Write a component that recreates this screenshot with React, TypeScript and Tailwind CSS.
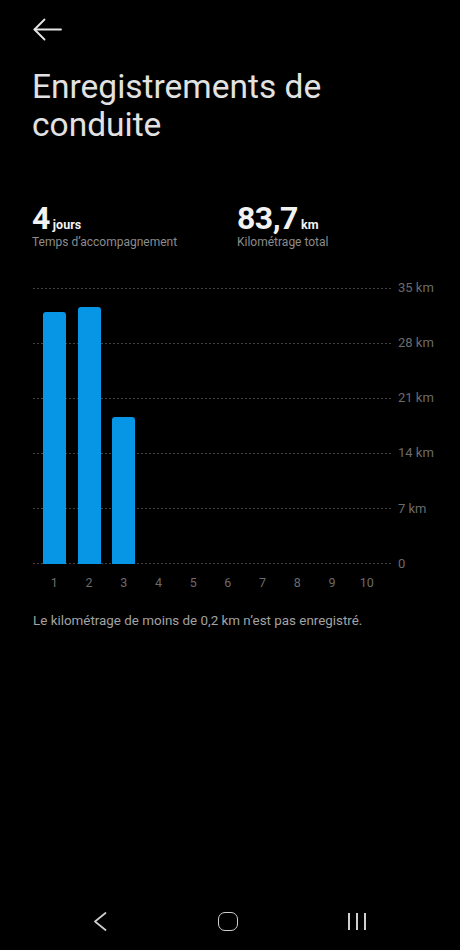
const days = [32.1, 32.7, 18.7, 0, 0, 0, 0, 0, 0, 0];
const ticks = ['35 km', '28 km', '21 km', '14 km', '7 km', '0'];
const MAX = 35;
const PLOT_H = 275;

const font = { fontFamily: 'Roboto, "Noto Sans", sans-serif' };

const StatBlock = ({ value, unit, label }: { value: string; unit: string; label: string }) => (
  <div className="flex flex-col">
    <div className="flex items-baseline">
      <span className="text-[32px] font-bold leading-[32px] text-[#f2f2f2] tracking-[-0.5px]">{value}</span>
      <span className="ml-[3px] text-[12.5px] font-bold text-[#f2f2f2]">{unit}</span>
    </div>
    <span className="text-[12px] leading-[14px] text-[#8c8c8c]">{label}</span>
  </div>
);

export default function App() {
  return (
    <div className="w-[460px] h-[950px] bg-black flex flex-col" style={font}>
      {/* header */}
      <div className="pl-[33px] pt-[18px] h-[52px]">
        <svg width="30" height="24" viewBox="0 0 30 24" fill="none" stroke="#e6e6e6" strokeWidth="1.8" strokeLinecap="round" strokeLinejoin="round">
          <path d="M1.5 11.5H28" />
          <path d="M11.5 1.5L1.5 11.5L11.5 21.5" />
        </svg>
      </div>

      <h1 className="mt-[16px] px-[32px] text-[33.5px] leading-[38px] text-[#e2e2e2] font-normal">
        Enregistrements de conduite
      </h1>

      {/* stats */}
      <div className="mt-[58px] pl-[32px] flex">
        <div className="w-[205px]">
          <StatBlock value="4" unit="jours" label="Temps d’accompagnement" />
        </div>
        <StatBlock value="83,7" unit="km" label="Kilométrage total" />
      </div>

      {/* chart */}
      <div className="mt-[39px] pl-[33px] flex">
        <div className="flex flex-col">
          <div className="relative w-[359px]" style={{ height: PLOT_H + 1 }}>
            <div className="absolute inset-0 flex flex-col justify-between">
              {ticks.map((t) => (
                <div
                  key={t}
                  className="h-px bg-[repeating-linear-gradient(90deg,#444_0_2px,transparent_2px_4px)]"
                />
              ))}
            </div>
            <div className="absolute inset-0 flex items-end pl-[4px] pr-[8px]">
              {days.map((v, i) => (
                <div key={i} className="flex-1 flex justify-center items-end">
                  {v > 0 && (
                    <div
                      className="w-[23px] bg-[#0795e6] rounded-t-[3px]"
                      style={{ height: Math.round((v / MAX) * PLOT_H) }}
                    />
                  )}
                </div>
              ))}
            </div>
          </div>
          <div className="flex pl-[4px] pr-[8px] mt-[12px]">
            {days.map((_, i) => (
              <div key={i} className="flex-1 text-center text-[12.5px] leading-[14px] text-[#6b6b6b]">
                {i + 1}
              </div>
            ))}
          </div>
        </div>
        <div className="ml-[6px] flex flex-col justify-between -mt-[8px]" style={{ height: PLOT_H + 17 }}>
          {ticks.map((t) => (
            <span key={t} className="h-[16px] leading-[16px] text-[13px] text-[#6b6b6b]">
              {t}
            </span>
          ))}
        </div>
      </div>

      <p className="mt-[21px] px-[33px] text-[13.4px] text-[#a3a3a3]">
        Le kilométrage de moins de 0,2 km n’est pas enregistré.
      </p>

      <div className="flex-1" />

      {/* nav bar */}
      <div className="h-[38px] flex items-start pl-[93px]">
        <svg width="14" height="19" viewBox="0 0 14 19" fill="none" stroke="#cfcfcf" strokeWidth="1.7" strokeLinecap="round" strokeLinejoin="round">
          <path d="M12.5 1L2 9.5L12.5 18" />
        </svg>
        <div className="ml-[111px] w-[20px] h-[19px] border-[1.8px] border-[#cfcfcf] rounded-[7px]" />
        <div className="ml-[110px] flex gap-[6px] pt-[1px]">
          <div className="w-[2px] h-[17px] bg-[#cfcfcf]" />
          <div className="w-[2px] h-[17px] bg-[#cfcfcf]" />
          <div className="w-[2px] h-[17px] bg-[#cfcfcf]" />
        </div>
      </div>
    </div>
  );
}
